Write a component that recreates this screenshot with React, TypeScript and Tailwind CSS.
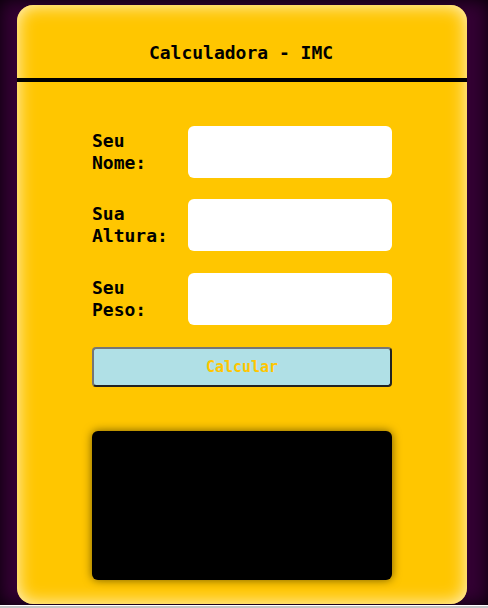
import React from 'react';

const mono = "font-['DejaVu_Sans_Mono','Liberation_Mono',monospace]";

const Field: React.FC<{ label: string[]; className?: string }> = ({ label, className }) => (
  <div className={`flex items-center ${className ?? ''}`}>
    <label className="w-[96px] text-[18px] leading-[22px] font-bold text-black">
      {label.map((l) => (
        <div key={l}>{l}</div>
      ))}
    </label>
    <input type="text" className="w-[204px] h-[52px] rounded-[6px] bg-white outline-none" />
  </div>
);

export default function App() {
  return (
    <div className={`${mono} bg-[#c4c4c4] min-h-[608px]`}>
      <div className="h-[606px] bg-[#330033] shadow-[inset_0_0_18px_rgba(0,0,0,0.9)] pt-[5px] pl-[17px] border-b border-white">
        <div className="w-[450px] h-[599px] rounded-[16px] bg-[#ffc600] shadow-[inset_0_0_18px_rgba(255,255,255,0.85)] overflow-hidden">
          <div className="pt-[37px] pb-[14px] pr-[2px] border-b-[4px] border-black text-center">
            <h1 className="text-[18px] leading-[22px] font-bold text-black">Calculadora - IMC</h1>
          </div>
          <div className="w-[300px] ml-[75px] pt-[44px] flex flex-col">
            <Field label={['Seu', 'Nome:']} />
            <Field label={['Sua', 'Altura:']} className="mt-[21px]" />
            <Field label={['Seu', 'Peso:']} className="mt-[22px]" />
            <button className="mt-[22px] h-[40px] rounded-[4px] bg-[#b0e0e6] border-2 border-t-[#767676] border-l-[#767676] border-r-[#222222] border-b-[#222222] text-[15px] font-bold text-[#ffc600]">
              Calcular
            </button>
            <div className="mt-[44px] h-[149px] rounded-[6px] bg-black shadow-[0_0_10px_rgba(0,0,0,0.55)]" />
          </div>
        </div>
      </div>
    </div>
  );
}
